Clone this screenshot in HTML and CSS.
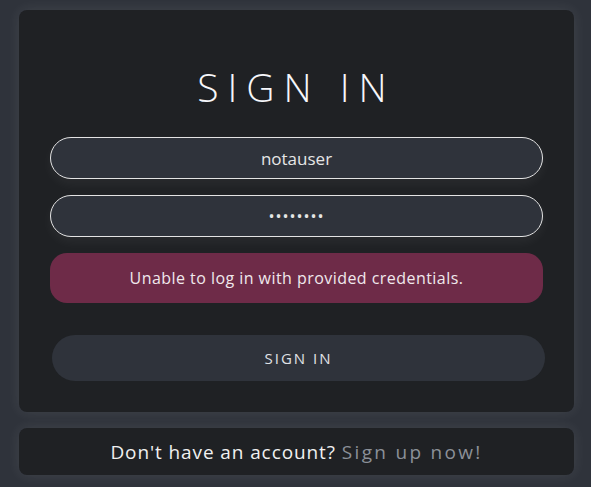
FILE: index.html
```html
<!DOCTYPE html>
<html lang="en">
<head>
<meta charset="utf-8">
<title>Sign in</title>
<link rel="stylesheet" href="styles.css">
</head>
<body>
<main class="page">
  <section class="card login">
    <h1 class="title">SIGN IN</h1>
    <form class="form">
      <input class="field" type="text" value="notauser">
      <input class="field" type="password" value="password">
      <div class="error">Unable to log in with provided credentials.</div>
      <button class="submit" type="button">SIGN IN</button>
    </form>
  </section>
  <section class="card footer">
    <span class="prompt">Don't have an account?</span>
    <a class="signup" href="#">Sign up now!</a>
  </section>
</main>
</body>
</html>
```

FILE: styles.css
```css
html, body {
  margin: 0;
  padding: 0;
  background: #2f333b;
  height: 100%;
}
body {
  font-family: "Open Sans", "DejaVu Sans", sans-serif;
  color: #f2f2f2;
}
.page {
  padding: 10px 17px 0 19px;
  display: flex;
  flex-direction: column;
  gap: 16px;
}
.card {
  background: #1f2124;
  border-radius: 8px;
  box-shadow: 0 0 14px rgba(255, 255, 255, 0.09);
}
.login {
  padding: 53px 31px 31px;
  display: flex;
  flex-direction: column;
}
.title {
  margin: 0 0 26px;
  text-align: center;
  font-weight: 300;
  font-size: 39px;
  line-height: 48px;
  letter-spacing: 9px;
  color: #f6f7fb;
}
.form {
  display: flex;
  flex-direction: column;
}
.field {
  box-sizing: border-box;
  height: 42px;
  width: 100%;
  border: 1px solid #e3e3e3;
  border-radius: 21px;
  background: #2f333b;
  color: #e6e6e6;
  font-family: inherit;
  font-size: 17px;
  text-align: center;
  outline: none;
  margin-bottom: 16px;
  box-shadow: 0 5px 12px rgba(255, 255, 255, 0.05);
}
.field[type="password"] {
  font-size: 16px;
  letter-spacing: 1px;
}
.error {
  height: 50px;
  border-radius: 17px;
  background: #6e2b48;
  color: #f0e8ec;
  font-size: 16px;
  letter-spacing: 0.45px;
  display: flex;
  align-items: center;
  justify-content: center;
}
.submit {
  margin: 32px -2px 0 2px;
  height: 46px;
  border: 0;
  border-radius: 23px;
  background: #2f333b;
  color: #e0e2e6;
  font-family: inherit;
  font-size: 15px;
  letter-spacing: 2px;
}
.footer {
  height: 47px;
  display: flex;
  align-items: center;
  justify-content: center;
  gap: 6px;
  font-size: 19px;
}
.prompt {
  color: #f0f0f0;
  letter-spacing: 0.9px;
}
.signup {
  color: #8b9098;
  text-decoration: none;
  letter-spacing: 2.3px;
}
```
